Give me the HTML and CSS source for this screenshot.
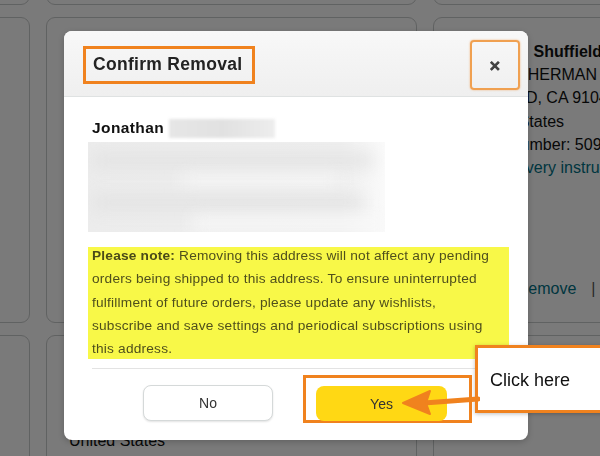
FILE: index.html
```html
<!DOCTYPE html>
<html>
<head>
<meta charset="utf-8">
<link rel="stylesheet" href="styles.css">
</head>
<body>
<div class="page">
  <div class="grid">
    <div class="card"></div>
    <div class="card"></div>
    <div class="card"></div>
    <div class="card"></div>
    <div class="card"></div>
    <div class="card addr">
      <div class="line name">Jonathan Shuffield</div>
      <div class="line">5301 N SHERMAN GROVE AVE</div>
      <div class="line">OAKLAND, CA 91040</div>
      <div class="line shift">United States</div>
      <div class="line">Phone number: 5095551234</div>
      <div class="line link shift">Add delivery instructions</div>
      <div class="actions"><span class="link">Edit</span><span class="sep">|</span><span class="link">Remove</span><span class="sep sep2">|</span><span class="link">Set as Default</span></div>
    </div>
    <div class="card"></div>
    <div class="card addr2">
      <div class="line">United States</div>
    </div>
    <div class="card"></div>
  </div>
</div>
<div class="overlay"></div>

<div class="modal">
  <div class="modal-header">
    <div class="title-frame"><h2 class="title">Confirm Removal</h2></div>
    <div class="close-frame"><span class="close">&#x2715;</span></div>
  </div>
  <div class="modal-body">
    <div class="person">
      <span class="pname">Jonathan</span><span class="blur-name"></span>
    </div>
    <div class="blur-block">
      <div class="bar b1"></div>
      <div class="bar b2"></div>
      <div class="bar b3"></div>
      <div class="bar b4"></div>
    </div>
    <div class="note">
      <p class="note-text"><b>Please note:</b> Removing this address will not affect any pending<br>orders being shipped to this address. To ensure uninterrupted<br>fulfillment of future orders, please update any wishlists,<br>subscribe and save settings and periodical subscriptions using<br>this address.</p>
    </div>
    <div class="divider"></div>
    <div class="modal-footer">
      <button class="btn btn-no">No</button>
      <div class="yes-frame"><button class="btn btn-yes">Yes</button></div>
    </div>
  </div>
</div>

<div class="callout">Click here</div>
<svg class="arrow" width="80" height="30" viewBox="0 0 80 30">
  <path d="M78 14 L24 18" stroke="#f0821e" stroke-width="5" fill="none" stroke-linecap="round"/>
  <path d="M3 18 L30 6 L26 18 L30 29 Z" fill="#f0821e" stroke="#f0821e" stroke-width="2" stroke-linejoin="round"/>
</svg>
</body>
</html>
```
FILE: styles.css
```css
html, body {
  margin: 0;
  padding: 0;
  width: 600px;
  height: 456px;
  overflow: hidden;
  background: #fff;
  font-family: "Liberation Sans", Arial, sans-serif;
}
.page {
  width: 600px;
  height: 456px;
  overflow: hidden;
}
.grid {
  display: grid;
  grid-template-columns: 130px 371px 330px;
  grid-template-rows: 105px 306px 200px;
  column-gap: 16px;
  row-gap: 12px;
  margin: -100px 0 0 -100px;
}
.card {
  border: 1px solid #c9cccc;
  border-radius: 9px;
  background: #fff;
  box-sizing: border-box;
}
.addr {
  padding: 22px 0 0 27px;
  font-size: 16px;
  color: #0f1111;
  white-space: nowrap;
  overflow: hidden;
}
.addr .line {
  line-height: 23.2px;
}
.addr .shift {
  padding-left: 7px;
}
.addr .name {
  font-weight: bold;
  margin-left: -5px;
  word-spacing: 2px;
}
.link {
  color: #007185;
}
.addr .actions {
  margin-top: 98px;
  line-height: 23.2px;
}
.addr .sep {
  color: #555;
  margin: 0 12px;
}
.addr .sep2 {
  margin: 0 12px 0 15px;
}
.addr2 {
  padding: 93px 0 0 22px;
  font-size: 16px;
  line-height: 23.2px;
  color: #0f1111;
}
.overlay {
  position: fixed;
  inset: 0;
  background: rgba(0, 0, 0, 0.52);
}
.modal {
  position: absolute;
  left: 64px;
  top: 31px;
  width: 464px;
  height: 409px;
  background: #fff;
  border-radius: 8px;
  overflow: hidden;
  box-shadow: 0 2px 6px rgba(0, 0, 0, 0.2);
}
.modal-header {
  height: 66px;
  box-sizing: border-box;
  background: linear-gradient(#f8f8f8, #efefef);
  border-bottom: 1px solid #dfe2e2;
  display: flex;
  align-items: center;
  justify-content: space-between;
  padding: 0 8px 0 19px;
}
.title-frame {
  border: 3px solid #f0821e;
  height: 38px;
  width: 172px;
  box-sizing: border-box;
  padding: 0 0 0 7px;
  display: flex;
  align-items: center;
  margin-top: 2px;
}
.title {
  margin: 0;
  font-size: 17.5px;
  font-weight: bold;
  color: #232323;
  letter-spacing: 0.3px;
}
.close-frame {
  width: 50px;
  height: 50px;
  box-sizing: border-box;
  border: 2.5px solid #f0a050;
  border-radius: 4px;
  display: flex;
  align-items: center;
  justify-content: center;
  margin-top: 2px;
  box-shadow: 0 0 2px rgba(240, 130, 30, 0.6);
}
.close {
  font-size: 14px;
  font-weight: bold;
  color: #444;
  -webkit-text-stroke: 0.6px #444;
  margin-top: 2px;
}
.modal-body {
  padding: 21px 18px 0 24px;
}
.person {
  display: flex;
  align-items: center;
  height: 20px;
}
.pname {
  font-weight: bold;
  font-size: 15.5px;
  letter-spacing: 0.4px;
  color: #111;
  margin-left: 4px;
}
.blur-name {
  display: inline-block;
  width: 106px;
  height: 19px;
  margin-left: 5px;
  background: linear-gradient(to right, #e6e6e6, #e1e1e1 50%, #ededed);
  filter: blur(1.5px);
}
.blur-block {
  width: 297px;
  height: 90px;
  margin-top: 4px;
  background: linear-gradient(to right, #ececec 0%, #efefef 85%, #fafafa 100%);
  position: relative;
  overflow: hidden;
  padding: 12px 0 0 4px;
  box-sizing: border-box;
  display: flex;
  flex-direction: column;
  gap: 8px;
}
.bar {
  height: 13px;
  background: #e2e2e2;
  filter: blur(8px);
}
.b1 { width: 280px; }
.b2 { width: 160px; background: #f6f6f6; margin-left: 90px; }
.b3 { width: 270px; }
.b4 { width: 200px; background: #f8f8f8; margin-left: 100px; }
.note {
  margin-top: 15px;
  background: #f8f848;
  height: 112px;
  width: 421px;
  box-sizing: border-box;
  padding: 0 0 0 4px;
  overflow: hidden;
}
.note-text {
  margin: -3px 0 0 0;
  font-size: 13.7px;
  line-height: 23.3px;
  letter-spacing: 0.2px;
  color: #4f4f1c;
  white-space: nowrap;
}
.note-text b {
  color: #4a4a18;
}
.divider {
  height: 1px;
  background: #e3e3e3;
  margin: 9px 0 0 4px;
  width: 418px;
}
.modal-footer {
  display: flex;
  align-items: flex-start;
  margin-top: 6px;
}
.btn {
  font-family: "Liberation Sans", Arial, sans-serif;
  font-size: 14px;
  color: #333;
  height: 36px;
  border-radius: 8px;
}
.btn-no {
  width: 130px;
  margin: 10px 0 0 55px;
  background: #fff;
  border: 1px solid #d5d9d9;
  box-shadow: 0 1px 2px rgba(15, 17, 17, 0.12);
}
.yes-frame {
  margin-left: 30px;
  width: 169px;
  height: 48px;
  box-sizing: border-box;
  border: 3px solid #f0821e;
  padding: 8px 0 0 10px;
}
.btn-yes {
  width: 131px;
  height: 35px;
  background: #ffd814;
  border: none;
}
.callout {
  position: absolute;
  left: 475px;
  top: 345px;
  width: 130px;
  height: 68px;
  box-sizing: border-box;
  background: #fff;
  border: 3px solid #f0821e;
  font-size: 18px;
  color: #111;
  padding: 22px 0 0 12px;
  box-shadow: 0 1px 4px rgba(0, 0, 0, 0.25);
}
.arrow {
  position: absolute;
  left: 400px;
  top: 385px;
}
```
